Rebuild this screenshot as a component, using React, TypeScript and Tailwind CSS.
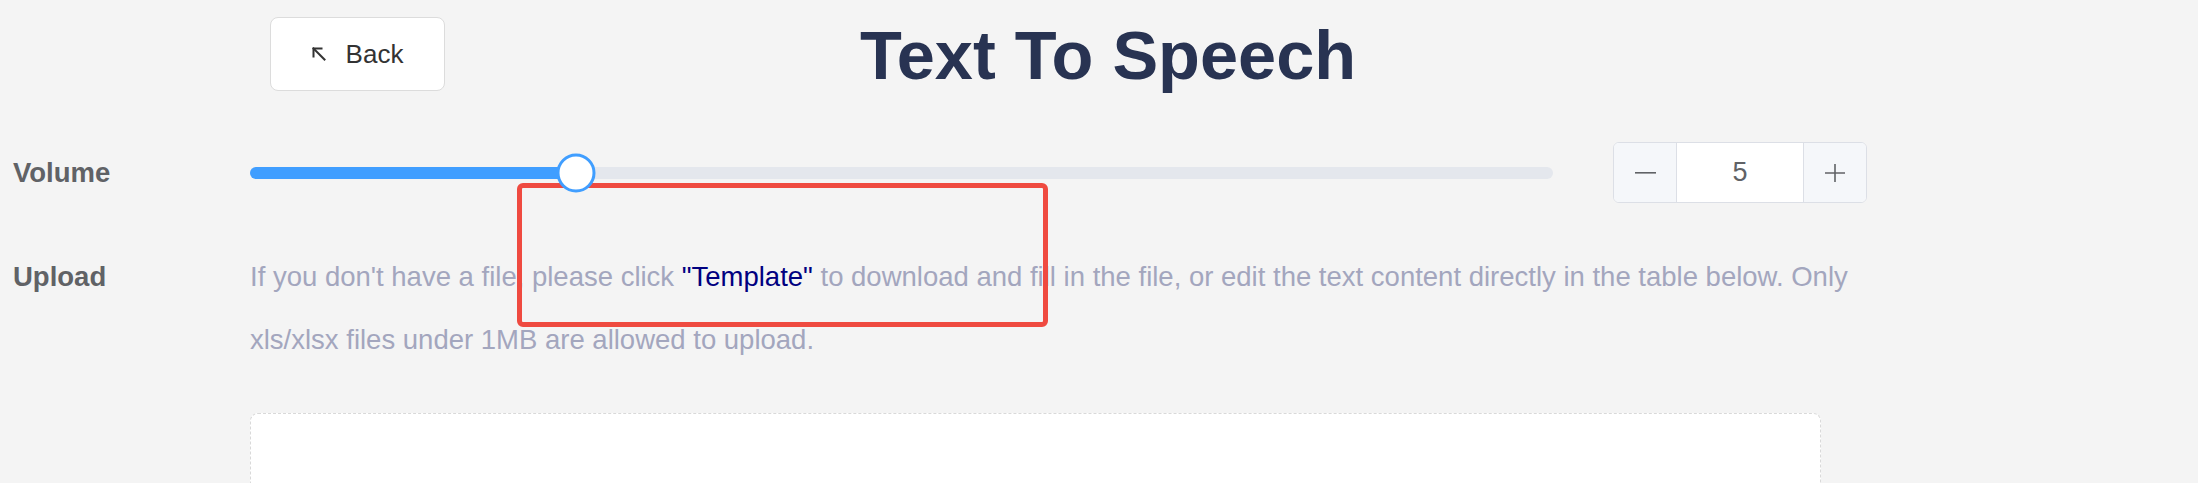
import { useState } from 'react';

function ArrowUpLeftIcon() {
    return (
        <svg width="14" height="14" viewBox="0 0 14 14" fill="none" stroke="#333333" strokeWidth="2" strokeLinecap="square">
            <path d="M1.5 9.5V1.5H9.5" />
            <path d="M1.5 1.5L12.5 12.5" />
        </svg>
    );
}

function VolumeSlider({ value, max }: { value: number; max: number }) {
    const fill = (value / max) * 100;

    return (
        <div className="relative h-[12px] w-[1303px] rounded-full bg-[#e4e7ed]">
            <div className="h-full rounded-full bg-[#409eff]" style={{ width: `${fill}%` }} />
            {/* thumb sits over the track */}
            <div
                className="absolute top-1/2 z-10 h-[39px] w-[39px] -translate-x-1/2 -translate-y-1/2 rounded-full border-[3px] border-[#409eff] bg-white"
                style={{ left: `${fill}%` }}
            />
        </div>
    );
}

function NumberInput({ value, onChange }: { value: number; onChange: (v: number) => void }) {
    return (
        <div className="flex h-[61px] w-[254px] overflow-hidden rounded-[6px] border border-[#dcdfe6] bg-white">
            <button
                onClick={() => onChange(Math.max(0, value - 1))}
                className="flex w-[63px] items-center justify-center border-r border-[#dcdfe6] bg-[#f5f7fa]"
            >
                <svg width="21" height="2" viewBox="0 0 21 2">
                    <rect width="21" height="1.6" fill="#606266" />
                </svg>
            </button>
            <div className="flex flex-1 items-center justify-center text-[27px] text-[#606266]">{value}</div>
            <button
                onClick={() => onChange(value + 1)}
                className="flex w-[63px] items-center justify-center border-l border-[#dcdfe6] bg-[#f5f7fa]"
            >
                <svg width="20" height="18" viewBox="0 0 20 18" fill="none" stroke="#606266" strokeWidth="1.6">
                    <path d="M0 9H20" />
                    <path d="M10 0V18" />
                </svg>
            </button>
        </div>
    );
}

export default function App() {
    const [volume, setVolume] = useState(5);

    return (
        <div className="relative h-screen overflow-hidden bg-[#f4f4f4] font-['Liberation_Sans',Arial,sans-serif]">
            {/* header */}
            <div className="flex items-start pl-[270px]">
                <button className="mt-[17px] flex h-[74px] w-[175px] items-center justify-center gap-[20px] rounded-lg border border-[#dcdcdc] bg-white text-[26px] text-[#333333]">
                    <ArrowUpLeftIcon />
                    <span>Back</span>
                </button>
                <h1 className="ml-[415px] mt-[22px] text-[68.5px] font-bold leading-none text-[#283352]">Text To Speech</h1>
            </div>

            {/* volume */}
            <div className="mt-[51px] flex h-[61px] items-center">
                <div className="w-[250px] pl-[13px] text-[27.5px] font-bold text-[#606266]">Volume</div>
                <VolumeSlider value={volume} max={20} />
                <div className="ml-[60px]">
                    <NumberInput value={volume} onChange={setVolume} />
                </div>
            </div>

            {/* upload */}
            <div className="mt-[42px] flex">
                <div className="w-[250px] shrink-0 pl-[13px] text-[27.5px] font-bold leading-[63px] text-[#606266]">Upload</div>
                <p className="w-[1617px] text-[27.5px] leading-[63px] text-[#a3a6be]">
                    If you don't have a file, please click <span className="text-[#000080]">"Template"</span> to download and fill in the file,
                    or edit the text content directly in the table below. Only xls/xlsx files under 1MB are allowed to upload.
                </p>
            </div>

            <div className="ml-[250px] mt-[42px] h-[120px] w-[1571px] rounded-lg border border-dashed border-[#d9d9d9] bg-white" />

            {/* annotation box */}
            <div className="absolute left-[517px] top-[183px] h-[144px] w-[531px] rounded-[6px] border-[5px] border-[#ef4a40]" />
        </div>
    );
}
